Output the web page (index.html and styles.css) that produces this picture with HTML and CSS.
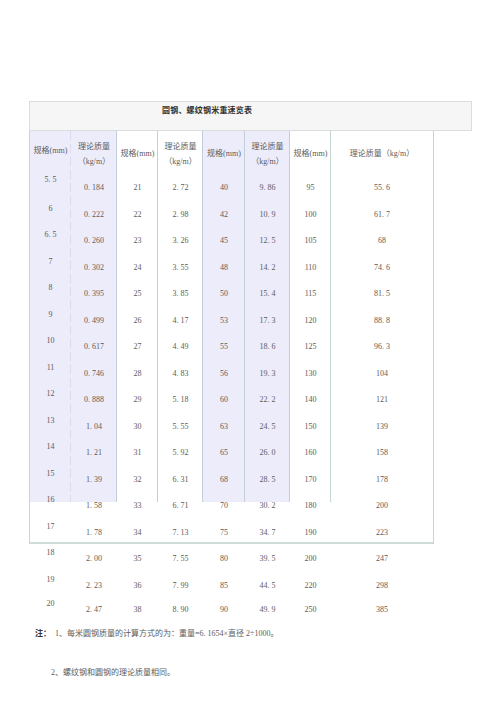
FILE: index.html
```html
<!DOCTYPE html>
<html lang="zh">
<head>
<meta charset="utf-8">
<title>圆钢、螺纹钢米重速览表</title>
<link rel="stylesheet" href="styles.css">
</head>
<body>
<div class="page">
  <div class="title">圆钢、螺纹钢米重速览表</div>
  <div class="sheet">
    <div class="cell head c1">规格(mm)</div>
    <div class="cell head two">理论质量<br>（kg/m）</div>
    <div class="cell head">规格(mm)</div>
    <div class="cell head two">理论质量<br>（kg/m）</div>
    <div class="cell head">规格(mm)</div>
    <div class="cell head two">理论质量<br>（kg/m）</div>
    <div class="cell head">规格(mm)</div>
    <div class="cell head">理论质量（kg/m）</div>

    <div class="cell c1 first">5. 5</div><div class="cell">0. 184</div><div class="cell">21</div><div class="cell">2. 72</div><div class="cell">40</div><div class="cell">9. 86</div><div class="cell">95</div><div class="cell">55. 6</div>
    <div class="cell c1">6</div><div class="cell">0. 222</div><div class="cell">22</div><div class="cell">2. 98</div><div class="cell">42</div><div class="cell">10. 9</div><div class="cell">100</div><div class="cell">61. 7</div>
    <div class="cell c1">6. 5</div><div class="cell">0. 260</div><div class="cell">23</div><div class="cell">3. 26</div><div class="cell">45</div><div class="cell">12. 5</div><div class="cell">105</div><div class="cell">68</div>
    <div class="cell c1">7</div><div class="cell">0. 302</div><div class="cell">24</div><div class="cell">3. 55</div><div class="cell">48</div><div class="cell">14. 2</div><div class="cell">110</div><div class="cell">74. 6</div>
    <div class="cell c1">8</div><div class="cell">0. 395</div><div class="cell">25</div><div class="cell">3. 85</div><div class="cell">50</div><div class="cell">15. 4</div><div class="cell">115</div><div class="cell">81. 5</div>
    <div class="cell c1">9</div><div class="cell">0. 499</div><div class="cell">26</div><div class="cell">4. 17</div><div class="cell">53</div><div class="cell">17. 3</div><div class="cell">120</div><div class="cell">88. 8</div>
    <div class="cell c1">10</div><div class="cell">0. 617</div><div class="cell">27</div><div class="cell">4. 49</div><div class="cell">55</div><div class="cell">18. 6</div><div class="cell">125</div><div class="cell">96. 3</div>
    <div class="cell c1">11</div><div class="cell">0. 746</div><div class="cell">28</div><div class="cell">4. 83</div><div class="cell">56</div><div class="cell">19. 3</div><div class="cell">130</div><div class="cell">104</div>
    <div class="cell c1">12</div><div class="cell">0. 888</div><div class="cell">29</div><div class="cell">5. 18</div><div class="cell">60</div><div class="cell">22. 2</div><div class="cell">140</div><div class="cell">121</div>
    <div class="cell c1">13</div><div class="cell">1. 04</div><div class="cell">30</div><div class="cell">5. 55</div><div class="cell">63</div><div class="cell">24. 5</div><div class="cell">150</div><div class="cell">139</div>
    <div class="cell c1">14</div><div class="cell">1. 21</div><div class="cell">31</div><div class="cell">5. 92</div><div class="cell">65</div><div class="cell">26. 0</div><div class="cell">160</div><div class="cell">158</div>
    <div class="cell c1">15</div><div class="cell">1. 39</div><div class="cell">32</div><div class="cell">6. 31</div><div class="cell">68</div><div class="cell">28. 5</div><div class="cell">170</div><div class="cell">178</div>
    <div class="cell c1">16</div><div class="cell">1. 58</div><div class="cell">33</div><div class="cell">6. 71</div><div class="cell">70</div><div class="cell">30. 2</div><div class="cell">180</div><div class="cell">200</div>
    <div class="cell c1">17</div><div class="cell">1. 78</div><div class="cell">34</div><div class="cell">7. 13</div><div class="cell">75</div><div class="cell">34. 7</div><div class="cell">190</div><div class="cell">223</div>
    <div class="cell c1">18</div><div class="cell">2. 00</div><div class="cell">35</div><div class="cell">7. 55</div><div class="cell">80</div><div class="cell">39. 5</div><div class="cell">200</div><div class="cell">247</div>
    <div class="cell c1">19</div><div class="cell">2. 23</div><div class="cell">36</div><div class="cell">7. 99</div><div class="cell">85</div><div class="cell">44. 5</div><div class="cell">220</div><div class="cell">298</div>
    <div class="cell c1">20</div><div class="cell">2. 47</div><div class="cell">38</div><div class="cell">8. 90</div><div class="cell">90</div><div class="cell">49. 9</div><div class="cell">250</div><div class="cell">385</div>
  </div>
  <div class="notes">
    <p class="note1"><b class="label">注：</b>1、每米圆钢质量的计算方式的为：重量=6. 1654×直径 2÷1000。</p>
    <p class="note2">2、螺纹钢和圆钢的理论质量相同。</p>
  </div>
</div>
</body>
</html>
```
FILE: styles.css
```css
html, body {
  margin: 0;
  padding: 0;
  background: #ffffff;
}

body {
  font-family: "Liberation Serif", "Noto Sans CJK SC", serif;
  font-size: 8px;
  color: #5c5c5c;
}

.page {
  padding: 101px 0 0 29px;
}

.title {
  box-sizing: border-box;
  width: 443px;
  height: 30px;
  border: 1px solid #dcdcdc;
  background: #f6f6f6;
  padding: 3px 0 0 132px;
  line-height: 11px;
  font-weight: bold;
  color: #333333;
  letter-spacing: 0.2px;
}

.sheet {
  box-sizing: border-box;
  width: 405px;
  padding: 0 1px;
  display: grid;
  grid-template-columns: 41px 46px 41px 45px 42px 45px 41px 102px;
  grid-template-rows: 44px repeat(16, 26.5px) 21px;
  background:
    linear-gradient(#c6d7d3, #c6d7d3) 0 0 / 1px 413px no-repeat,
    linear-gradient(#c6d7d3, #c6d7d3) 404px 0 / 1px 413px no-repeat,
    linear-gradient(#cfdcd9, #cfdcd9) 0 411px / 405px 2px no-repeat,
    repeating-linear-gradient(to bottom, #dadced 0 9px, transparent 9px 13px) 41px 0 / 1px 371px no-repeat,
    linear-gradient(to right,
      #ececfb 0 86px,
      #c2cfda 86px 87px,
      #ffffff 87px 127px,
      #c2cfda 127px 128px,
      #ffffff 128px 172px,
      #c2cfda 172px 173px,
      #ececfb 173px 214px,
      #c2cfda 214px 215px,
      #ececfb 215px 259px,
      #c2cfda 259px 260px,
      #ffffff 260px 300px,
      #c6d7d3 300px 301px,
      transparent 301px) 1px 0 / 403px 371px no-repeat;
}

.cell {
  display: flex;
  align-items: center;
  justify-content: center;
  text-align: center;
  line-height: 12px;
  white-space: nowrap;
}

.cell.c1 {
  padding-bottom: 12px;
}

.cell.c1.first {
  padding-bottom: 16px;
}

.cell.head {
  padding-bottom: 0;
  padding-top: 1px;
}

.cell.head.c1 {
  padding-top: 0;
  padding-bottom: 4px;
}

.cell.two {
  line-height: 15px;
}

.notes {
  padding-top: 8px;
}

.notes p {
  margin: 0;
  line-height: 12px;
}

.notes .note1 {
  padding-left: 6px;
}

.label {
  color: #333333;
  margin-right: 4px;
}

.notes .note2 {
  margin-top: 27px;
  padding-left: 22px;
}
```
